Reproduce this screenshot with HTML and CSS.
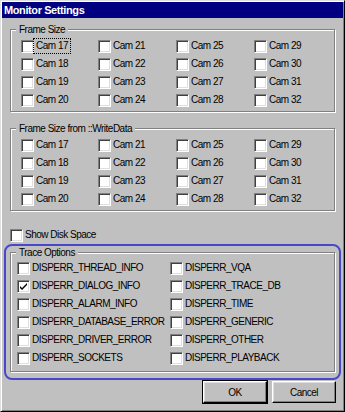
FILE: index.html
```html
<!DOCTYPE html>
<html>
<head>
    <title>Monitor Settings</title>
    <link rel="stylesheet" href="styles.css">
</head>
<body>
    <div class="window">
        <div class="titlebar">Monitor Settings</div>
        <div class="dialog">

            <fieldset class="group">
                <legend>Frame Size</legend>
                <div class="cams">
                    <label class="check"><span class="box"></span><span class="text focus">Cam 17</span></label>
                    <label class="check"><span class="box"></span><span class="text">Cam 21</span></label>
                    <label class="check"><span class="box"></span><span class="text">Cam 25</span></label>
                    <label class="check"><span class="box"></span><span class="text">Cam 29</span></label>
                    <label class="check"><span class="box"></span><span class="text">Cam 18</span></label>
                    <label class="check"><span class="box"></span><span class="text">Cam 22</span></label>
                    <label class="check"><span class="box"></span><span class="text">Cam 26</span></label>
                    <label class="check"><span class="box"></span><span class="text">Cam 30</span></label>
                    <label class="check"><span class="box"></span><span class="text">Cam 19</span></label>
                    <label class="check"><span class="box"></span><span class="text">Cam 23</span></label>
                    <label class="check"><span class="box"></span><span class="text">Cam 27</span></label>
                    <label class="check"><span class="box"></span><span class="text">Cam 31</span></label>
                    <label class="check"><span class="box"></span><span class="text">Cam 20</span></label>
                    <label class="check"><span class="box"></span><span class="text">Cam 24</span></label>
                    <label class="check"><span class="box"></span><span class="text">Cam 28</span></label>
                    <label class="check"><span class="box"></span><span class="text">Cam 32</span></label>
                </div>
            </fieldset>

            <fieldset class="group group-second">
                <legend>Frame Size from ::WriteData</legend>
                <div class="cams">
                    <label class="check"><span class="box"></span><span class="text">Cam 17</span></label>
                    <label class="check"><span class="box"></span><span class="text">Cam 21</span></label>
                    <label class="check"><span class="box"></span><span class="text">Cam 25</span></label>
                    <label class="check"><span class="box"></span><span class="text">Cam 29</span></label>
                    <label class="check"><span class="box"></span><span class="text">Cam 18</span></label>
                    <label class="check"><span class="box"></span><span class="text">Cam 22</span></label>
                    <label class="check"><span class="box"></span><span class="text">Cam 26</span></label>
                    <label class="check"><span class="box"></span><span class="text">Cam 30</span></label>
                    <label class="check"><span class="box"></span><span class="text">Cam 19</span></label>
                    <label class="check"><span class="box"></span><span class="text">Cam 23</span></label>
                    <label class="check"><span class="box"></span><span class="text">Cam 27</span></label>
                    <label class="check"><span class="box"></span><span class="text">Cam 31</span></label>
                    <label class="check"><span class="box"></span><span class="text">Cam 20</span></label>
                    <label class="check"><span class="box"></span><span class="text">Cam 24</span></label>
                    <label class="check"><span class="box"></span><span class="text">Cam 28</span></label>
                    <label class="check"><span class="box"></span><span class="text">Cam 32</span></label>
                </div>
            </fieldset>

            <label class="check disk-space"><span class="box"></span><span class="text">Show Disk Space</span></label>

            <!-- highlighted area -->
            <div class="highlight">
                <fieldset class="group group-trace">
                    <legend>Trace Options</legend>
                    <div class="trace">
                        <label class="check"><span class="box"></span><span class="text">DISPERR_THREAD_INFO</span></label>
                        <label class="check"><span class="box"></span><span class="text">DISPERR_VQA</span></label>
                        <label class="check"><span class="box"><svg width="9" height="9" viewBox="0 0 9 9"><path d="M1 4 L3 6 L8 1 L8 3 L3 8 L1 6 Z" fill="#000"/></svg></span><span class="text">DISPERR_DIALOG_INFO</span></label>
                        <label class="check"><span class="box"></span><span class="text">DISPERR_TRACE_DB</span></label>
                        <label class="check"><span class="box"></span><span class="text">DISPERR_ALARM_INFO</span></label>
                        <label class="check"><span class="box"></span><span class="text">DISPERR_TIME</span></label>
                        <label class="check"><span class="box"></span><span class="text">DISPERR_DATABASE_ERROR</span></label>
                        <label class="check"><span class="box"></span><span class="text">DISPERR_GENERIC</span></label>
                        <label class="check"><span class="box"></span><span class="text">DISPERR_DRIVER_ERROR</span></label>
                        <label class="check"><span class="box"></span><span class="text">DISPERR_OTHER</span></label>
                        <label class="check"><span class="box"></span><span class="text">DISPERR_SOCKETS</span></label>
                        <label class="check"><span class="box"></span><span class="text">DISPERR_PLAYBACK</span></label>
                    </div>
                </fieldset>
            </div>

            <div class="buttons">
                <button class="btn btn-default">OK</button>
                <button class="btn">Cancel</button>
            </div>
        </div>
    </div>
</body>
</html>
```

FILE: styles.css
```css
body {
    margin: 0;
    background-color: #c0c0c0;
    font-family: "Liberation Sans", Arial, sans-serif;
    font-size: 10px;
    letter-spacing: -0.5px;
    color: #000;
}

.window {
    box-sizing: border-box;
    width: 345px;
    height: 412px;
    padding: 1px;
    background-color: #c0c0c0;
    border: 1px solid;
    border-color: #dfdfdf #000 #000 #dfdfdf;
    box-shadow: inset 1px 1px #fff, inset -1px -1px #808080;
}

.titlebar {
    height: 16px;
    line-height: 16px;
    padding-left: 2px;
    background-color: #000080;
    color: #fff;
    font-size: 11px;
    font-weight: bold;
    letter-spacing: -0.4px;
}

.dialog {
    padding: 5px 7px 0 8px;
}

.group {
    margin: 0 1px 0 0;
    padding: 0;
    border: 1px solid #808080;
    box-shadow: inset 1px 1px #fff, 1px 1px #fff;
    min-width: 0;
}

.group legend {
    margin-left: 5px;
    padding: 0 3px;
    line-height: 13px;
    background-color: #c0c0c0;
}

.group-second {
    margin-top: 10px;
}

.cams {
    display: grid;
    grid-template-columns: 77px 78px 78px 1fr;
    padding: 1px 0 2px 10px;
}

.trace {
    display: grid;
    grid-template-columns: 153px 1fr;
    padding: 0 0 4px 6px;
}

.check {
    display: flex;
    align-items: center;
    height: 18px;
    white-space: nowrap;
}

.box {
    box-sizing: border-box;
    display: flex;
    align-items: center;
    justify-content: center;
    flex: none;
    width: 13px;
    height: 13px;
    background-color: #fff;
    border: 1px solid;
    border-color: #808080 #fff #fff #808080;
    box-shadow: inset 1px 1px #404040, inset -1px -1px #dfdfdf;
}

.text {
    padding: 0 2px;
    line-height: 12px;
}

.focus {
    outline: 1px dotted #000;
    outline-offset: 0;
    padding-top: 1px;
    padding-bottom: 1px;
}

.disk-space {
    margin-top: 15px;
}

.highlight {
    margin: 0 -5px 0 -6px;
    padding: 0 3px 6px 4px;
    border: 2px solid #4848c8;
    border-radius: 8px;
}

.buttons {
    display: flex;
    justify-content: flex-end;
    gap: 5px;
    margin-top: 1px;
}

.btn {
    box-sizing: border-box;
    width: 64px;
    height: 22px;
    padding: 0;
    font-family: inherit;
    font-size: 10px;
    letter-spacing: -0.5px;
    color: #000;
    background-color: #c0c0c0;
    border: 1px solid;
    border-color: #fff #000 #000 #fff;
    box-shadow: inset -1px -1px #808080, inset 1px 1px #dfdfdf;
}

.btn-default {
    outline: 1px solid #000;
    outline-offset: 0;
}
```
